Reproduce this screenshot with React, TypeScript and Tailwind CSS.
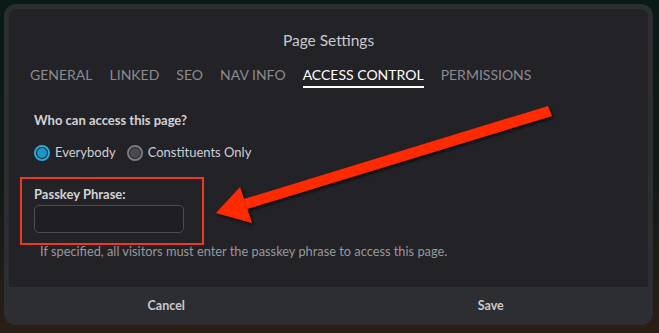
import { useState } from "react";

// Page settings modal, access control tab, with red annotation overlay.
const TABS = ["GENERAL", "LINKED", "SEO", "NAV INFO", "ACCESS CONTROL", "PERMISSIONS"];

function Radio({ checked, label }: { checked: boolean; label: string }) {
  return (
    <label className="flex items-center gap-[5px] cursor-pointer">
      <span
        className={`flex h-[16px] w-[16px] items-center justify-center rounded-full border-2 ${
          checked ? "border-[#2aa9da]" : "border-[#7c7c80]"
        }`}
      >
        <span className={`h-[10px] w-[10px] rounded-full ${checked ? "bg-[#1497c9]" : "bg-[#4a4a4e]"}`} />
      </span>
      <span className="text-[13px] text-[#cfcfd3]">{label}</span>
    </label>
  );
}

export default function App() {
  const [active] = useState("ACCESS CONTROL");

  return (
    <div
      className="relative h-[333px] w-[659px] overflow-hidden bg-gradient-to-b from-[#0a1a17] via-[#0f1a16] to-[#2a1f15] p-[4px] pr-[6px] pb-[8px]"
      style={{ fontFamily: "Lato, 'Noto Sans', sans-serif" }}
    >
      <div className="flex h-full w-full flex-col rounded-[12px] bg-[#2d2e32]">
        {/* body */}
        <div className="mx-[5px] mt-[5px] flex-1 rounded-t-[8px] bg-[#232227] pl-[21px]">
          <h1 className="pt-[21px] pr-[21px] text-center text-[15.5px] leading-[20px] text-[#c9c9cd]">Page Settings</h1>

          <div className="mt-[16px] flex gap-[17px]">
            {TABS.map((t) => (
              <div
                key={t}
                className={`border-b-2 pb-[2px] text-[14px] leading-[18px] ${
                  t === active ? "border-white text-white" : "border-transparent text-[#8b8b90]"
                }`}
              >
                {t}
              </div>
            ))}
          </div>

          <div className="pl-[4px]">
            <div className="mt-[23px] text-[13px] font-bold leading-[18px] text-[#d2d2d6]">Who can access this page?</div>

            <div className="mt-[14px] flex items-center gap-[11px]">
              <Radio checked label="Everybody" />
              <Radio checked={false} label="Constituents Only" />
            </div>

            <div className="mt-[22px] text-[13px] font-bold leading-[18px] text-[#d2d2d6]">Passkey Phrase:</div>
            <input
              className="mt-[2px] h-[28px] w-[150px] rounded-[5px] border border-[#4b4b50] bg-[#1f1f23] px-2 text-[13px] text-white outline-none"
              type="text"
            />
            <p className="mt-[10px] pl-[6px] text-[12.8px] leading-[16px] text-[#98989d]">
              If specified, all visitors must enter the passkey phrase to access this page.
            </p>
          </div>
        </div>

        {/* footer */}
        <div className="grid h-[38px] grid-cols-2 items-center text-[12.5px] font-bold text-[#cbcbcf]">
          <button className="text-center">Cancel</button>
          <button className="text-center">Save</button>
        </div>
      </div>

      {/* annotation: red box */}
      <div className="pointer-events-none absolute left-[20px] top-[177px] h-[68px] w-[184px] border-2 border-[#ee3a1f]" />

      {/* annotation: arrow */}
      <svg className="pointer-events-none absolute left-0 top-0" width="659" height="333" viewBox="0 0 659 333">
        <defs>
          <filter id="sh" x="-10%" y="-10%" width="120%" height="130%">
            <feDropShadow dx="1.5" dy="2" stdDeviation="1.5" floodColor="#000" floodOpacity="0.7" />
          </filter>
        </defs>
        <g filter="url(#sh)" fill="#ff2a00">
          <polygon points="548,106 552,116 247,209 244,199" />
          <polygon points="216,213 240,187 252,223" />
        </g>
      </svg>
    </div>
  );
}
